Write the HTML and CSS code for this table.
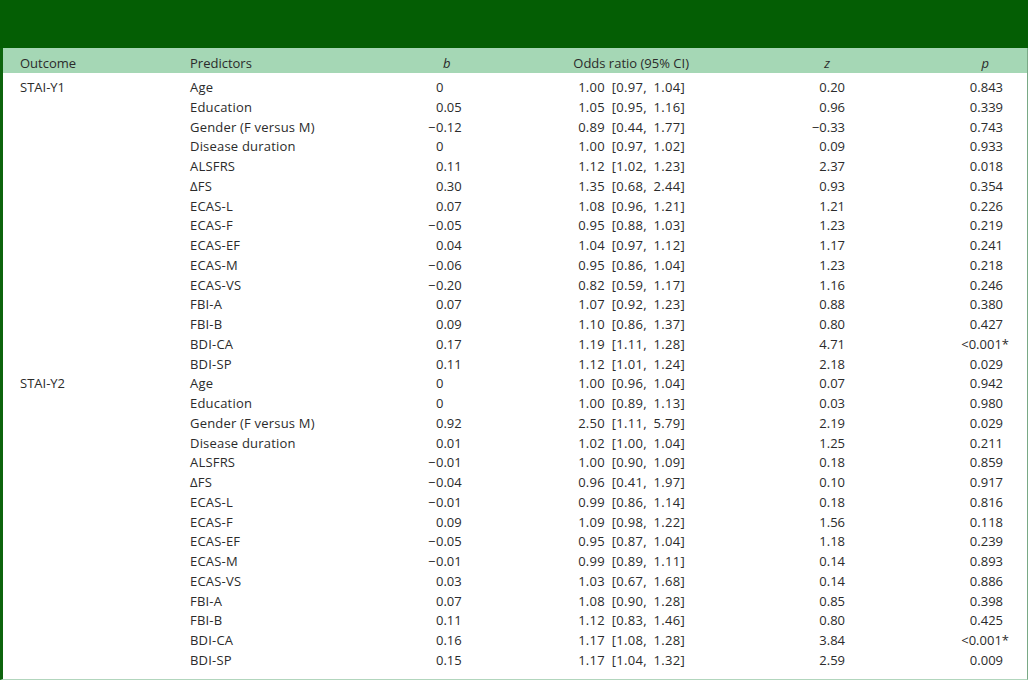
FILE: index.html
```html
<!DOCTYPE html>
<html lang="en">
<head>
<meta charset="utf-8">
<title>Regression table</title>
<link rel="stylesheet" href="styles.css">
</head>
<body>
<div class="frame">
  <div class="band"></div>
  <div class="table">
    <div class="row head">
      <div class="c1">Outcome</div>
      <div class="c2">Predictors</div>
      <div class="c3"><i>b</i></div>
      <div class="c4">Odds ratio (95% CI)</div>
      <div class="c5"><i>z</i></div>
      <div class="c6"><i>p</i></div>
    </div>
    <div class="body">
      <div class="row"><div class="c1">STAI-Y1</div><div class="c2">Age</div><div class="c3">0</div><div class="c4">1.00 [0.97, 1.04]</div><div class="c5">0.20</div><div class="c6">0.843</div></div>
      <div class="row"><div class="c1"></div><div class="c2">Education</div><div class="c3">0.05</div><div class="c4">1.05 [0.95, 1.16]</div><div class="c5">0.96</div><div class="c6">0.339</div></div>
      <div class="row"><div class="c1"></div><div class="c2">Gender (F versus M)</div><div class="c3"><span class="m">−</span>0.12</div><div class="c4">0.89 [0.44, 1.77]</div><div class="c5">−0.33</div><div class="c6">0.743</div></div>
      <div class="row"><div class="c1"></div><div class="c2">Disease duration</div><div class="c3">0</div><div class="c4">1.00 [0.97, 1.02]</div><div class="c5">0.09</div><div class="c6">0.933</div></div>
      <div class="row"><div class="c1"></div><div class="c2">ALSFRS</div><div class="c3">0.11</div><div class="c4">1.12 [1.02, 1.23]</div><div class="c5">2.37</div><div class="c6">0.018</div></div>
      <div class="row"><div class="c1"></div><div class="c2">ΔFS</div><div class="c3">0.30</div><div class="c4">1.35 [0.68, 2.44]</div><div class="c5">0.93</div><div class="c6">0.354</div></div>
      <div class="row"><div class="c1"></div><div class="c2">ECAS-L</div><div class="c3">0.07</div><div class="c4">1.08 [0.96, 1.21]</div><div class="c5">1.21</div><div class="c6">0.226</div></div>
      <div class="row"><div class="c1"></div><div class="c2">ECAS-F</div><div class="c3"><span class="m">−</span>0.05</div><div class="c4">0.95 [0.88, 1.03]</div><div class="c5">1.23</div><div class="c6">0.219</div></div>
      <div class="row"><div class="c1"></div><div class="c2">ECAS-EF</div><div class="c3">0.04</div><div class="c4">1.04 [0.97, 1.12]</div><div class="c5">1.17</div><div class="c6">0.241</div></div>
      <div class="row"><div class="c1"></div><div class="c2">ECAS-M</div><div class="c3"><span class="m">−</span>0.06</div><div class="c4">0.95 [0.86, 1.04]</div><div class="c5">1.23</div><div class="c6">0.218</div></div>
      <div class="row"><div class="c1"></div><div class="c2">ECAS-VS</div><div class="c3"><span class="m">−</span>0.20</div><div class="c4">0.82 [0.59, 1.17]</div><div class="c5">1.16</div><div class="c6">0.246</div></div>
      <div class="row"><div class="c1"></div><div class="c2">FBI-A</div><div class="c3">0.07</div><div class="c4">1.07 [0.92, 1.23]</div><div class="c5">0.88</div><div class="c6">0.380</div></div>
      <div class="row"><div class="c1"></div><div class="c2">FBI-B</div><div class="c3">0.09</div><div class="c4">1.10 [0.86, 1.37]</div><div class="c5">0.80</div><div class="c6">0.427</div></div>
      <div class="row"><div class="c1"></div><div class="c2">BDI-CA</div><div class="c3">0.17</div><div class="c4">1.19 [1.11, 1.28]</div><div class="c5">4.71</div><div class="c6">&lt;0.001<span class="star">*</span></div></div>
      <div class="row"><div class="c1"></div><div class="c2">BDI-SP</div><div class="c3">0.11</div><div class="c4">1.12 [1.01, 1.24]</div><div class="c5">2.18</div><div class="c6">0.029</div></div>
      <div class="row"><div class="c1">STAI-Y2</div><div class="c2">Age</div><div class="c3">0</div><div class="c4">1.00 [0.96, 1.04]</div><div class="c5">0.07</div><div class="c6">0.942</div></div>
      <div class="row"><div class="c1"></div><div class="c2">Education</div><div class="c3">0</div><div class="c4">1.00 [0.89, 1.13]</div><div class="c5">0.03</div><div class="c6">0.980</div></div>
      <div class="row"><div class="c1"></div><div class="c2">Gender (F versus M)</div><div class="c3">0.92</div><div class="c4">2.50 [1.11, 5.79]</div><div class="c5">2.19</div><div class="c6">0.029</div></div>
      <div class="row"><div class="c1"></div><div class="c2">Disease duration</div><div class="c3">0.01</div><div class="c4">1.02 [1.00, 1.04]</div><div class="c5">1.25</div><div class="c6">0.211</div></div>
      <div class="row"><div class="c1"></div><div class="c2">ALSFRS</div><div class="c3"><span class="m">−</span>0.01</div><div class="c4">1.00 [0.90, 1.09]</div><div class="c5">0.18</div><div class="c6">0.859</div></div>
      <div class="row"><div class="c1"></div><div class="c2">ΔFS</div><div class="c3"><span class="m">−</span>0.04</div><div class="c4">0.96 [0.41, 1.97]</div><div class="c5">0.10</div><div class="c6">0.917</div></div>
      <div class="row"><div class="c1"></div><div class="c2">ECAS-L</div><div class="c3"><span class="m">−</span>0.01</div><div class="c4">0.99 [0.86, 1.14]</div><div class="c5">0.18</div><div class="c6">0.816</div></div>
      <div class="row"><div class="c1"></div><div class="c2">ECAS-F</div><div class="c3">0.09</div><div class="c4">1.09 [0.98, 1.22]</div><div class="c5">1.56</div><div class="c6">0.118</div></div>
      <div class="row"><div class="c1"></div><div class="c2">ECAS-EF</div><div class="c3"><span class="m">−</span>0.05</div><div class="c4">0.95 [0.87, 1.04]</div><div class="c5">1.18</div><div class="c6">0.239</div></div>
      <div class="row"><div class="c1"></div><div class="c2">ECAS-M</div><div class="c3"><span class="m">−</span>0.01</div><div class="c4">0.99 [0.89, 1.11]</div><div class="c5">0.14</div><div class="c6">0.893</div></div>
      <div class="row"><div class="c1"></div><div class="c2">ECAS-VS</div><div class="c3">0.03</div><div class="c4">1.03 [0.67, 1.68]</div><div class="c5">0.14</div><div class="c6">0.886</div></div>
      <div class="row"><div class="c1"></div><div class="c2">FBI-A</div><div class="c3">0.07</div><div class="c4">1.08 [0.90, 1.28]</div><div class="c5">0.85</div><div class="c6">0.398</div></div>
      <div class="row"><div class="c1"></div><div class="c2">FBI-B</div><div class="c3">0.11</div><div class="c4">1.12 [0.83, 1.46]</div><div class="c5">0.80</div><div class="c6">0.425</div></div>
      <div class="row"><div class="c1"></div><div class="c2">BDI-CA</div><div class="c3">0.16</div><div class="c4">1.17 [1.08, 1.28]</div><div class="c5">3.84</div><div class="c6">&lt;0.001<span class="star">*</span></div></div>
      <div class="row"><div class="c1"></div><div class="c2">BDI-SP</div><div class="c3">0.15</div><div class="c4">1.17 [1.04, 1.32]</div><div class="c5">2.59</div><div class="c6">0.009</div></div>
    </div>
  </div>
</div>
</body>
</html>
```

FILE: styles.css
```css
html, body {
  margin: 0;
  padding: 0;
  background: #ffffff;
}

body {
  font-family: "Open Sans", "Liberation Sans", sans-serif;
  font-size: 13px;
  color: #2b2b2b;
}

.frame {
  width: 1028px;
}

.band {
  height: 48px;
  background: #045e04;
}

.table {
  border-left: 3px solid #0d640d;
  border-right: 1px solid #79a985;
  border-bottom: 1px solid #b2d6bd;
}

.row {
  display: grid;
  grid-template-columns: 183px 234px 100px 200px 150px 157px;
  line-height: 19.75px;
  white-space: nowrap;
}

.head {
  background: #a5d7b5;
  height: 25px;
  box-sizing: border-box;
  padding-top: 5px;
  line-height: 20px;
}

.body {
  padding: 5px 0 8px;
}

.c1 { padding-left: 17px; }
.c2 { padding-left: 4px; letter-spacing: 0.2px; }
.c3 { padding-left: 16px; }
.c4 { text-align: right; padding-right: 35px; word-spacing: 3px; letter-spacing: 0.3px; }
.c5 { text-align: right; padding-right: 25px; }
.c6 { text-align: right; padding-right: 24px; }

.head .c2 { letter-spacing: 0; }
.head .c3 { padding-left: 23px; }
.head .c4 { padding-right: 31px; word-spacing: 0; letter-spacing: 0; }
.head .c5 { padding-right: 40px; }
.head .c6 { padding-right: 38px; }

.m {
  display: inline-block;
  width: 8px;
  margin-left: -8px;
}

.star {
  margin-right: -6px;
}
```
